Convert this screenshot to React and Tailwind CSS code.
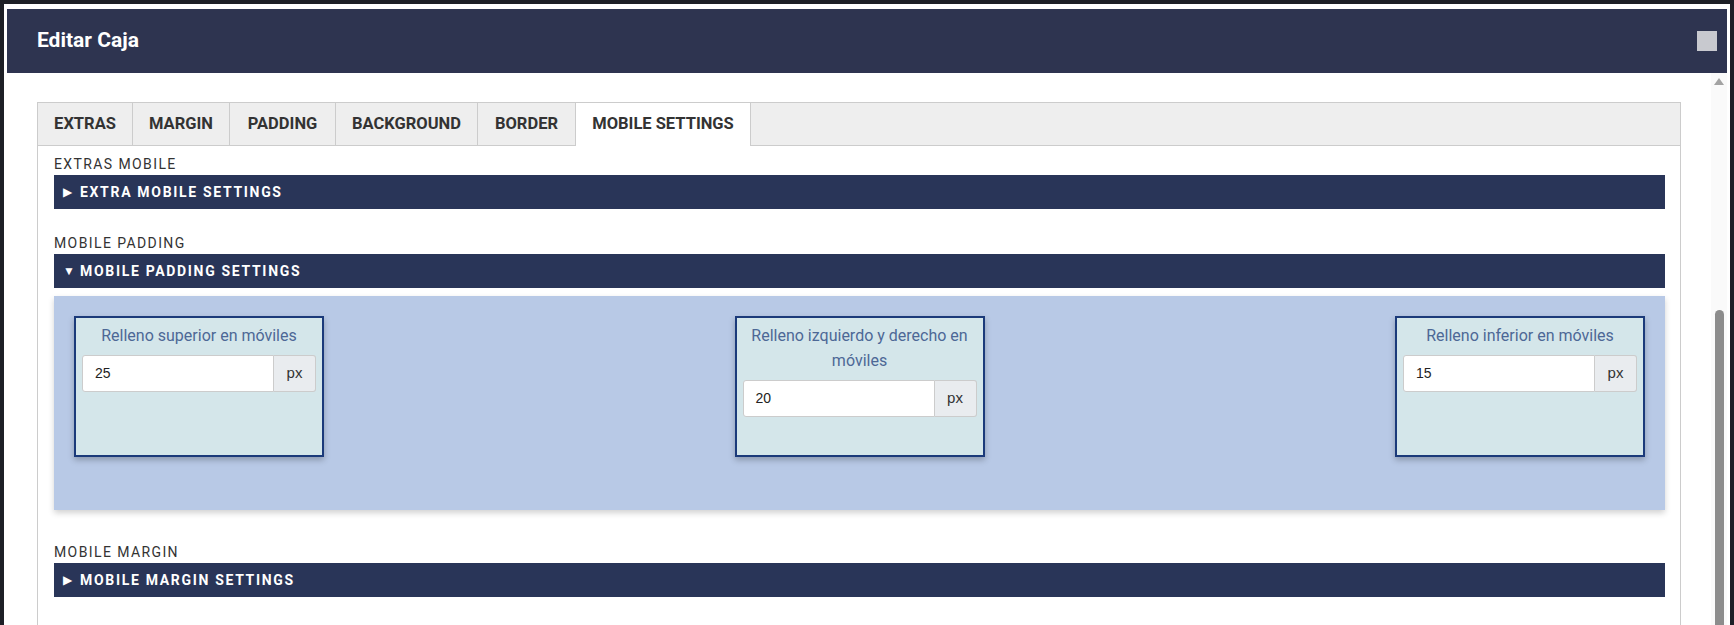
import React from 'react';

const tabs = [
  { label: 'EXTRAS', w: 'w-[95px]' },
  { label: 'MARGIN', w: 'w-[97px]' },
  { label: 'PADDING', w: 'w-[106px]' },
  { label: 'BACKGROUND', w: 'w-[142px]' },
  { label: 'BORDER', w: 'w-[98px]' },
  { label: 'MOBILE SETTINGS', w: 'w-[175px]', active: true },
];

const cards = [
  { label: 'Relleno superior en móviles', value: '25' },
  { label: 'Relleno izquierdo y derecho en móviles', value: '20' },
  { label: 'Relleno inferior en móviles', value: '15' },
];

const SectionLabel = ({ children, className = '' }) => (
  <div className={`text-[14px] leading-[21px] tracking-[0.1em] text-[#333] ${className}`}>{children}</div>
);

const Bar = ({ open, children }) => (
  <div className="h-[34px] bg-[#293558] flex items-center pl-[9px] text-white">
    <span className="text-[12px] w-[17px] leading-none">{open ? '▼' : '▶'}</span>
    <span className="text-[14px] font-bold tracking-[0.12em]">{children}</span>
  </div>
);

const PadCard = ({ label, value }) => (
  <div className="w-[250px] h-[141px] border-2 border-[#1b3a7a] bg-[#d4e6ea] px-[6px] pt-[5px] shadow-[0_3px_6px_rgba(0,0,0,0.25)]">
    <div className="text-center text-[16px] leading-[25px] text-[#4d6896]">{label}</div>
    <div className="flex mt-[7px] h-[37px]">
      <div className="flex-1 bg-white border border-[#ccc] rounded-l-[3px] flex items-center pl-[12px] text-[14px] text-[#222] font-['Liberation_Sans',Arial,sans-serif]">
        {value}
      </div>
      <div className="w-[42px] bg-[#e9ecef] border border-l-0 border-[#ccc] rounded-r-[3px] flex items-center justify-center text-[15px] text-[#333] font-['Liberation_Sans',Arial,sans-serif]">
        px
      </div>
    </div>
  </div>
);

export default function App() {
  return (
    <div className="w-[1734px] h-[625px] overflow-hidden bg-[#1d1f26] pt-[4px] px-[4px] font-['Roboto','Open_Sans',sans-serif]">
      <div className="bg-white h-full pt-[5px] px-[3px] flex flex-col">
        {/* header */}
        <div className="h-[64px] bg-[#2e3450] flex items-center justify-between pl-[30px] pr-[10px]">
          <span className="text-white text-[21px] font-bold">Editar Caja</span>
          <span className="w-[20px] h-[20px] bg-[#c8c9cf]" />
        </div>

        <div className="flex flex-1 min-h-0">
          {/* body */}
          <div className="flex-1 px-[30px] pt-[29px] flex flex-col min-h-0">
            <div className="flex h-[44px] border border-[#ccc] bg-[#eeeeee] relative z-10">
              {tabs.map((t) => (
                <div
                  key={t.label}
                  className={`${t.w} flex items-center justify-center border-r border-[#ccc] text-[16.5px] font-bold text-[#333] ${
                    t.active ? 'bg-white h-[43px]' : ''
                  }`}
                >
                  {t.label}
                </div>
              ))}
            </div>

            <div className="flex-1 border-x border-[#ccc] pl-[16px] pr-[15px] pt-[8px]">
              <SectionLabel>EXTRAS MOBILE</SectionLabel>
              <Bar>EXTRA MOBILE SETTINGS</Bar>

              <SectionLabel className="mt-[24px]">MOBILE PADDING</SectionLabel>
              <Bar open>MOBILE PADDING SETTINGS</Bar>

              <div className="mt-[8px] h-[214px] bg-[#b8c9e6] px-[20px] pt-[20px] flex justify-between items-start shadow-[0_3px_6px_rgba(0,0,0,0.18)]">
                {cards.map((c) => (
                  <PadCard key={c.value} {...c} />
                ))}
              </div>

              <SectionLabel className="mt-[32px]">MOBILE MARGIN</SectionLabel>
              <Bar>MOBILE MARGIN SETTINGS</Bar>
            </div>
          </div>

          {/* scrollbar */}
          <div className="w-[16px] bg-[#fafafa] flex flex-col items-center">
            <svg width="10" height="7" viewBox="0 0 10 7" className="mt-[5px]">
              <path d="M5 0 L10 7 L0 7 Z" fill="#a3a3a3" />
            </svg>
            <div className="mt-[225px] w-[9px] flex-1 bg-[#8c8c8c] rounded-t-[5px]" />
          </div>
        </div>
      </div>
    </div>
  );
}
